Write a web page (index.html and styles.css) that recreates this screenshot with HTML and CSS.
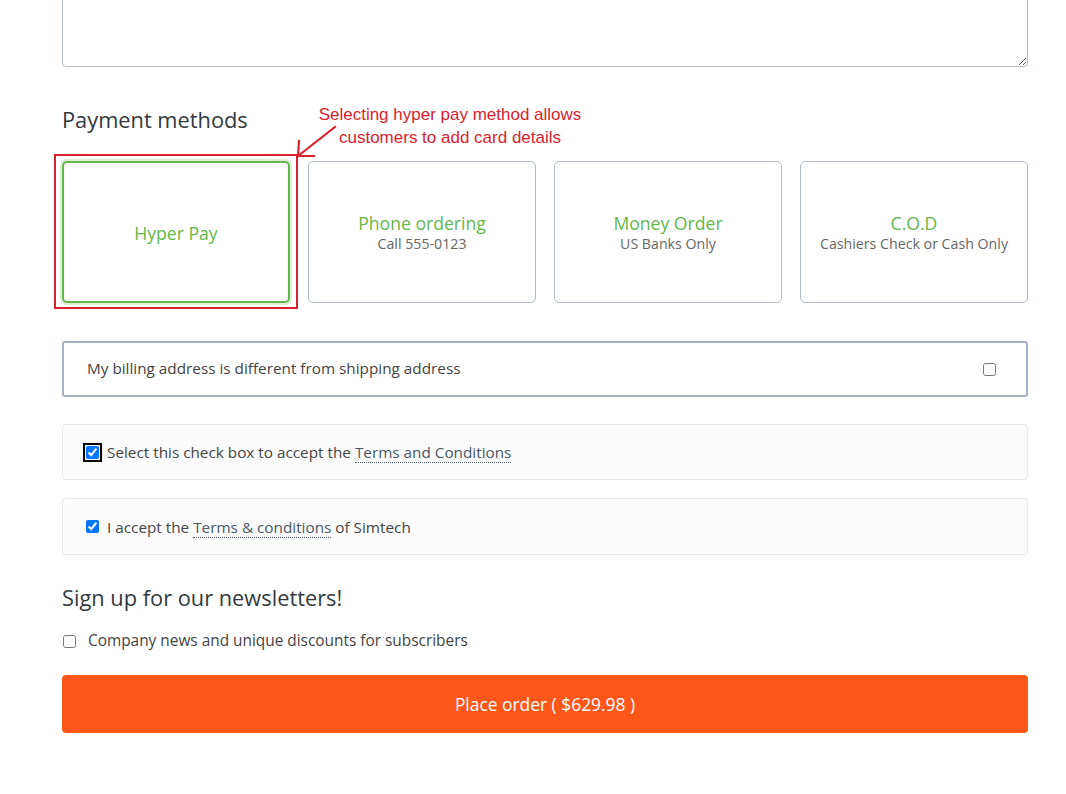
FILE: index.html
```html
<!DOCTYPE html>
<html lang="en">
<head>
<meta charset="utf-8">
<title>Checkout</title>
<link rel="stylesheet" href="styles.css">
</head>
<body>
<main class="page">
  <textarea class="notes" aria-label="Order notes"></textarea>

  <section class="payment">
    <h2 class="section-title">Payment methods</h2>
    <div class="annotation">
      <p class="annotation-text">Selecting hyper pay method allows<br>customers to add card details</p>
      <svg class="annotation-arrow" width="50" height="40" viewBox="0 0 50 40">
        <path d="M40 2 L3 31 M3 31 L19 31 M3 31 L4 16" stroke="#d8232f" stroke-width="2.2" fill="none" stroke-linecap="square"/>
      </svg>
    </div>
    <div class="methods">
      <div class="method selected">
        <span class="method-title">Hyper Pay</span>
        <span class="highlight-box"></span>
      </div>
      <div class="method">
        <span class="method-title">Phone ordering</span>
        <span class="method-sub">Call 555-0123</span>
      </div>
      <div class="method">
        <span class="method-title">Money Order</span>
        <span class="method-sub">US Banks Only</span>
      </div>
      <div class="method">
        <span class="method-title">C.O.D</span>
        <span class="method-sub">Cashiers Check or Cash Only</span>
      </div>
    </div>
  </section>

  <label class="billing">
    <span>My billing address is different from shipping address</span>
    <input type="checkbox" class="billing-check">
  </label>

  <label class="terms terms-first">
    <input type="checkbox" class="check focused" checked>
    <span>Select this check box to accept the <a class="dotted" href="#">Terms and Conditions</a></span>
  </label>

  <label class="terms terms-second">
    <input type="checkbox" class="check" checked>
    <span>I accept the <a class="dotted" href="#">Terms &amp; conditions</a> of Simtech</span>
  </label>

  <h2 class="section-title newsletter-title">Sign up for our newsletters!</h2>
  <label class="newsletter">
    <input type="checkbox" class="check">
    <span>Company news and unique discounts for subscribers</span>
  </label>

  <button class="place-order" type="button">Place order ( $629.98 )</button>
</main>
</body>
</html>
```

FILE: styles.css
```css
html, body {
  margin: 0;
  padding: 0;
  background: #ffffff;
  overflow: hidden;
}

body {
  font-family: "Open Sans", "Noto Sans", sans-serif;
  color: #404040;
}

.page {
  width: 966px;
  margin-left: 62px;
  display: flex;
  flex-direction: column;
}

.notes {
  display: block;
  box-sizing: border-box;
  width: 100%;
  height: 100px;
  margin: -33px 0 0 0;
  border: 1px solid #b4bdc9;
  border-radius: 4px;
  resize: vertical;
  font-family: inherit;
}

.payment {
  position: relative;
}

.section-title {
  margin: 38px 0 0 0;
  font-size: 21.8px;
  line-height: 30px;
  font-weight: 400;
  color: #333a40;
}

.annotation {
  position: absolute;
  left: 228px;
  top: 36px;
  width: 320px;
}

.annotation-text {
  margin: 0;
  text-align: center;
  font-family: "Liberation Sans", "Open Sans", sans-serif;
  font-size: 17px;
  line-height: 23px;
  color: #d8232f;
}

.annotation-arrow {
  position: absolute;
  left: 5px;
  top: 22px;
}

.methods {
  margin-top: 26px;
  display: grid;
  grid-template-columns: repeat(4, 1fr);
  gap: 18px;
}

.method {
  position: relative;
  box-sizing: border-box;
  height: 142px;
  border: 1px solid #b3bdca;
  border-radius: 5px;
  display: flex;
  flex-direction: column;
  align-items: center;
  justify-content: center;
  background: #fff;
  padding-top: 2px;
}

.method.selected {
  border: 2px solid #62b84a;
  box-shadow: 0 0 0 2px #dcefd3;
}

.method-title {
  font-size: 17.6px;
  line-height: 22px;
  color: #62b84a;
}

.method-sub {
  font-size: 14.2px;
  line-height: 20px;
  color: #666;
}

.highlight-box {
  position: absolute;
  left: -10px;
  top: -9px;
  right: -10px;
  bottom: -8px;
  border: 2px solid #d8232f;
}

.billing {
  margin-top: 38px;
  box-sizing: border-box;
  height: 56px;
  border: 2px solid #a4b1c2;
  border-radius: 3px;
  display: flex;
  align-items: center;
  justify-content: space-between;
  padding: 0 30px 0 23px;
  font-size: 15.3px;
  color: #444;
}

.billing span {
  margin-top: -2px;
}

.billing-check {
  margin: 0;
  width: 13px;
  height: 13px;
}

.terms {
  box-sizing: border-box;
  border: 1px solid #e6e8eb;
  border-radius: 3px;
  background: #fbfbfc;
  display: flex;
  align-items: center;
  padding-left: 23px;
  font-size: 15.3px;
  color: #444;
}

.terms-first {
  margin-top: 27px;
  height: 56px;
}

.terms-second {
  margin-top: 18px;
  height: 57px;
}

.check {
  width: 13px;
  height: 13px;
  margin: 0 8px 0 0;
}

.check.focused {
  outline: 2px solid #000;
  outline-offset: 1px;
  border-radius: 2px;
  margin-left: 0;
  margin-right: 8px;
}

.dotted {
  color: #4a5866;
  text-decoration: none;
  border-bottom: 1px dotted #4a5866;
}

.newsletter-title {
  margin-top: 28px;
}

.newsletter {
  margin-top: 18px;
  display: flex;
  align-items: center;
  font-size: 15.4px;
  line-height: 20px;
  color: #444;
  padding-left: 1px;
}

.newsletter .check {
  margin-right: 12px;
}

.place-order {
  margin-top: 24px;
  height: 58px;
  border: none;
  border-radius: 4px;
  background: #ff561a;
  color: #fff;
  font-family: "Open Sans", sans-serif;
  font-size: 17.4px;
  cursor: pointer;
}
```
